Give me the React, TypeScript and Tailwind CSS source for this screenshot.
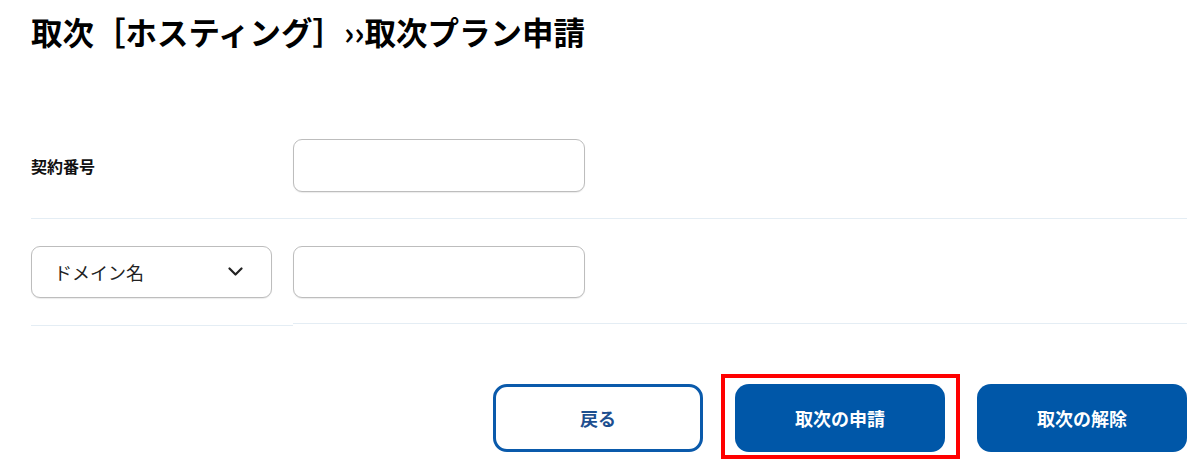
import React from "react";

export default function App() {
  const font = { fontFamily: '"Noto Sans CJK JP", "Noto Sans", sans-serif' };
  return (
    <div className="w-[1200px] h-[466px] bg-white overflow-hidden text-[#111]" style={font}>
      <div className="pl-[31px] pr-[13px]">
        <h1 className="pt-[13px] text-[31.5px] leading-[36px] font-bold text-black">
          取次［ホスティング］››取次プラン申請
        </h1>

        <div className="mt-[90px]">
          {/* row 1 */}
          <div className="flex items-center pb-[26px] border-b border-[#e4edf4]">
            <div className="w-[262px] text-[16px] font-bold leading-none">契約番号</div>
            <input
              className="w-[292px] h-[53px] rounded-[9px] border border-[#bdbdbd] bg-white outline-none shadow-[0_1px_1px_rgba(0,0,0,0.08)]"
              type="text"
            />
          </div>

          {/* row 2 */}
          <div className="flex items-start pt-[27px]">
            <div className="w-[262px] flex flex-col">
              <div className="w-[241px] h-[52px] rounded-[9px] border border-[#bdbdbd] bg-white flex items-center justify-between pl-[22px] pr-[28px] shadow-[0_1px_1px_rgba(0,0,0,0.08)]">
                <span className="text-[18px] text-[#222] leading-none">ドメイン名</span>
                <svg width="15" height="10" viewBox="0 0 15 10" fill="none">
                  <polyline points="1.5,1.5 7.5,7.5 13.5,1.5" stroke="#222" strokeWidth="2.2" strokeLinecap="round" strokeLinejoin="round" />
                </svg>
              </div>
              <div className="mt-[27px] h-px bg-[#e4edf4]" />
            </div>
            <div className="flex-1 flex flex-col">
              <input
                className="w-[292px] h-[52px] rounded-[9px] border border-[#bdbdbd] bg-white outline-none shadow-[0_1px_1px_rgba(0,0,0,0.08)]"
                type="text"
              />
              <div className="mt-[25px] h-px bg-[#e4edf4]" />
            </div>
          </div>
        </div>

        {/* buttons */}
        <div className="mt-[58px] flex justify-end gap-[32px]">
          <button className="w-[210px] h-[68px] rounded-[14px] border-[3px] border-[#0a5aab] bg-white text-[#1d4f8f] text-[18px] font-bold">
            戻る
          </button>
          <div className="relative">
            <div className="absolute left-[-14px] top-[-10px] right-[-15px] bottom-[-7px] border-[4px] border-[#ff0000]" />
            <button className="relative w-[210px] h-[68px] rounded-[14px] bg-[#0057a8] text-white text-[18px] font-bold">
              取次の申請
            </button>
          </div>
          <button className="w-[210px] h-[68px] rounded-[14px] bg-[#0057a8] text-white text-[18px] font-bold">
            取次の解除
          </button>
        </div>
      </div>
    </div>
  );
}
